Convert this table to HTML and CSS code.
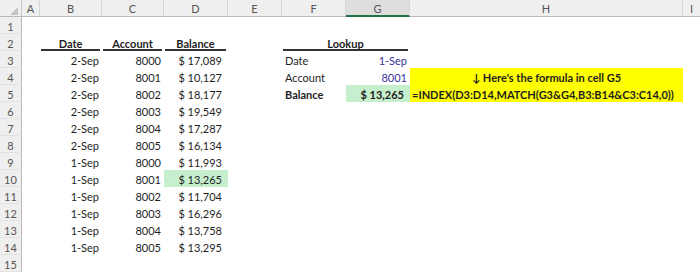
FILE: index.html
```html
<!DOCTYPE html>
<html>
<head>
<meta charset="utf-8">
<link rel="stylesheet" href="styles.css">
</head>
<body>
<div class="sheet">
  <div class="row hdr">
    <div class="corner"><span class="tri"></span></div>
    <div class="ch">A</div><div class="ch">B</div><div class="ch">C</div><div class="ch">D</div><div class="ch">E</div><div class="ch">F</div><div class="ch sel">G</div><div class="ch">H</div><div class="ch last">I</div>
  </div>
  <div class="row"><div class="rh">1</div><div></div><div></div><div></div><div></div><div></div><div></div><div></div><div></div><div></div></div>
  <div class="row"><div class="rh">2</div><div></div><div class="c th">Date</div><div class="c th">Account</div><div class="c th">Balance</div><div></div><div class="c th span2">Lookup</div><div></div><div></div></div>
  <div class="row"><div class="rh">3</div><div></div><div class="c r">2-Sep</div><div class="c r">8000</div><div class="c cur">$ 17,089</div><div></div><div class="c l">Date</div><div class="c r blue">1-Sep</div><div></div><div></div></div>
  <div class="row"><div class="rh">4</div><div></div><div class="c r">2-Sep</div><div class="c r">8001</div><div class="c cur">$ 10,127</div><div></div><div class="c l">Account</div><div class="c r blue">8001</div><div class="c note ctr">↓ Here's the formula in cell G5</div><div></div></div>
  <div class="row"><div class="rh">5</div><div></div><div class="c r">2-Sep</div><div class="c r">8002</div><div class="c cur">$ 18,177</div><div></div><div class="c l b">Balance</div><div class="c cur b green">$ 13,265</div><div class="c note formula">=INDEX(D3:D14,MATCH(G3&amp;G4,B3:B14&amp;C3:C14,0))</div><div></div></div>
  <div class="row"><div class="rh">6</div><div></div><div class="c r">2-Sep</div><div class="c r">8003</div><div class="c cur">$ 19,549</div><div></div><div></div><div></div><div></div><div></div></div>
  <div class="row"><div class="rh">7</div><div></div><div class="c r">2-Sep</div><div class="c r">8004</div><div class="c cur">$ 17,287</div><div></div><div></div><div></div><div></div><div></div></div>
  <div class="row"><div class="rh">8</div><div></div><div class="c r">2-Sep</div><div class="c r">8005</div><div class="c cur">$ 16,134</div><div></div><div></div><div></div><div></div><div></div></div>
  <div class="row"><div class="rh">9</div><div></div><div class="c r">1-Sep</div><div class="c r">8000</div><div class="c cur">$ 11,993</div><div></div><div></div><div></div><div></div><div></div></div>
  <div class="row"><div class="rh">10</div><div></div><div class="c r">1-Sep</div><div class="c r">8001</div><div class="c cur green">$ 13,265</div><div></div><div></div><div></div><div></div><div></div></div>
  <div class="row"><div class="rh">11</div><div></div><div class="c r">1-Sep</div><div class="c r">8002</div><div class="c cur">$ 11,704</div><div></div><div></div><div></div><div></div><div></div></div>
  <div class="row"><div class="rh">12</div><div></div><div class="c r">1-Sep</div><div class="c r">8003</div><div class="c cur">$ 16,296</div><div></div><div></div><div></div><div></div><div></div></div>
  <div class="row"><div class="rh">13</div><div></div><div class="c r">1-Sep</div><div class="c r">8004</div><div class="c cur">$ 13,758</div><div></div><div></div><div></div><div></div><div></div></div>
  <div class="row"><div class="rh">14</div><div></div><div class="c r">1-Sep</div><div class="c r">8005</div><div class="c cur">$ 13,295</div><div></div><div></div><div></div><div></div><div></div></div>
  <div class="row"><div class="rh">15</div><div></div><div></div><div></div><div></div><div></div><div></div><div></div><div></div><div></div></div>
</div>
</body>
</html>
```
FILE: styles.css
```css
html, body {
  margin: 0;
  padding: 0;
  background: #ffffff;
}
body {
  width: 700px;
  height: 274px;
  overflow: hidden;
  font-family: Lato, "Open Sans", sans-serif;
  font-size: 11px;
  color: #1e1e1e;
}
.sheet {
  display: flex;
  flex-direction: column;
}
.row {
  display: grid;
  grid-template-columns: 22px 18px 62px 62px 64px 54px 64px 64px 273px 17px;
  height: 17px;
}
.row > div {
  box-sizing: border-box;
  height: 17px;
  line-height: 19px;
  white-space: nowrap;
  overflow: visible;
}
.hdr {
  background: #efefef;
  border-bottom: 1px solid #b9b9b9;
  height: 17px;
  box-sizing: border-box;
}
.hdr > div {
  height: 16px;
  line-height: 17px;
}
.corner {
  position: relative;
  border-right: 1px solid #c6c6c6;
}
.tri {
  position: absolute;
  right: 3px;
  bottom: 1px;
  width: 0;
  height: 0;
  border-left: 8px solid transparent;
  border-bottom: 8px solid #c4c4c4;
}
.ch {
  text-align: center;
  color: #555555;
  border-right: 1px solid #d6d6d6;
}
.ch.last {
  border-right: none;
}
.ch.sel {
  background: #dedede;
  border-bottom: 2px solid #217346;
  height: 17px;
}
.rh {
  background: #efefef;
  border-right: 1px solid #b9b9b9;
  border-bottom: 1px solid #e2e2e2;
  color: #555555;
  text-align: center;
}
.c {
  padding: 0 3px;
}
.r { text-align: right; }
.l { text-align: left; }
.ctr { text-align: center; }
.b { font-weight: 700; }
.cur {
  text-align: right;
  padding-right: 6px;
}
.th {
  font-weight: 700;
  text-align: center;
  border-bottom: 2px solid #333333;
  margin: 0 2px 0 1px;
  line-height: 17px;
}
.span2 {
  grid-column: span 2;
}
.blue {
  color: #34349a;
}
.green {
  background: #c6efce;
}
.note {
  background: #ffff00;
  font-weight: 700;
  color: #1e1e1e;
}
.formula {
  text-align: left;
  padding-left: 2px;
}
```
